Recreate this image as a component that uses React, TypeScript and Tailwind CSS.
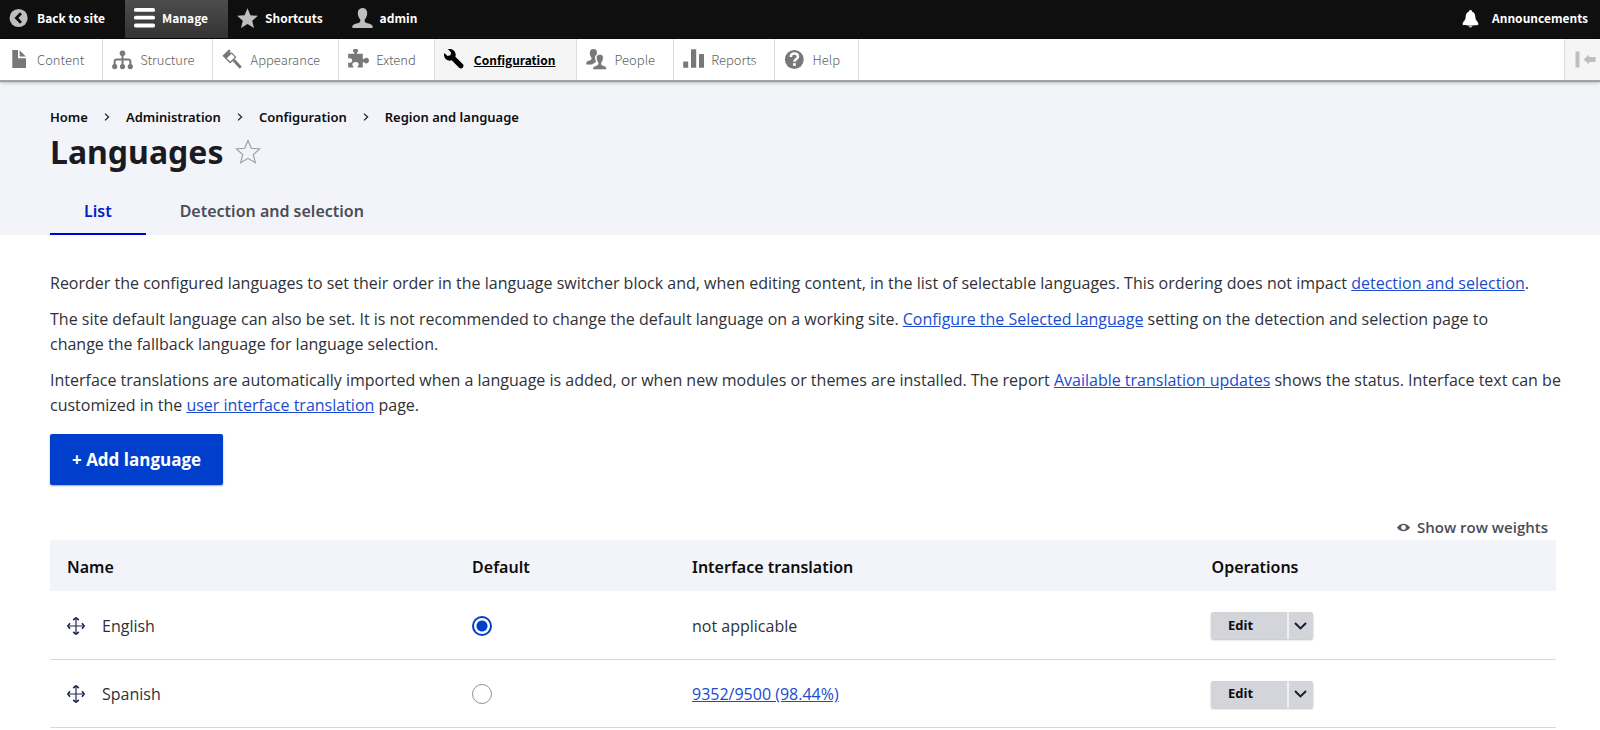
import type { ReactNode } from "react";

type IconProps = { children: ReactNode; className?: string };

function Icon({ children, className = "size-[21px]" }: IconProps) {
  return (
    <svg viewBox="0 0 21 21" className={`${className} shrink-0`} fill="currentColor" aria-hidden="true">
      {children}
    </svg>
  );
}

const STAR = "M10.5 0.3 L13.4 7.2 L20.9 7.8 L15.2 12.7 L17 20 L10.5 16.1 L4 20 L5.8 12.7 L0.1 7.8 L7.6 7.2 Z";

const icons = {
  back: (
    <>
      <circle cx="9.6" cy="10" r="9.1" />
      <path d="M12 5.2 L7.4 10 L12 14.8" fill="none" stroke="#0f0f0f" strokeWidth="2.8" />
    </>
  ),
  menu: (
    <>
      <rect x="0" y="0" width="21" height="3.8" rx="1.6" />
      <rect x="0" y="7.8" width="21" height="3.8" rx="1.6" />
      <rect x="0" y="15.6" width="21" height="3.8" rx="1.6" />
    </>
  ),
  star: <path d={STAR} />,
  user: (
    <path d="M10.5 0 C13.6 0 15.2 2.2 15.2 5 C15.2 7.8 14.2 9.6 13 11.2 C12.4 12.2 12.6 13.8 13.4 14.4 C15.4 15.4 20 15.6 20.6 18 V20 H0.4 V18 C1 15.6 5.6 15.4 7.6 14.4 C8.4 13.8 8.6 12.2 8 11.2 C6.8 9.6 5.8 7.8 5.8 5 C5.8 2.2 7.4 0 10.5 0 Z" />
  ),
  file: (
    <>
      <path d="M3.3 1 H9 V9.2 H17 V19 H3.3 Z" />
      <path d="M10.6 1.2 L16.8 7.6 H10.6 Z" />
    </>
  ),
  structure: (
    <>
      <circle cx="10.5" cy="4.2" r="2.8" />
      <path d="M10.5 5 V17 M2.6 17 V12.8 Q2.6 10.6 4.8 10.6 H16.2 Q18.4 10.6 18.4 12.8 V17" fill="none" stroke="currentColor" strokeWidth="2" />
      <circle cx="2.7" cy="17.6" r="2.6" />
      <circle cx="10.5" cy="17.6" r="2.6" />
      <circle cx="18.3" cy="17.6" r="2.6" />
    </>
  ),
  brush: (
    <>
      <path d="M0.4 6.8 L7.2 0.2 L8.6 1.8 L7.6 4 L9.8 3.2 L14.4 8.2 L8.2 14.4 Z M8.2 12.6 L12.8 8.2 L9.6 4.8 L4.8 9.2 Z" fillRule="evenodd" />
      <path d="M11.6 11 L18.8 18.8" stroke="currentColor" strokeWidth="3" />
    </>
  ),
  puzzle: (
    <path d="M0.2 4.8 H5.8 C6.8 4.8 6.6 3.8 5.4 3 C4.8 1.4 4.4 0 7.6 0 C10.8 0 10.4 1.4 9.8 3 C8.6 3.8 8.4 4.8 9.4 4.8 H14.8 V9.2 C14.8 10.4 15.8 10.4 16.6 9.4 C17.4 8.2 21 8.4 21 11.6 C21 14.8 17.4 15 16.6 13.8 C15.8 12.8 14.8 12.8 14.8 14 V18.6 H9.6 V17.4 C11.4 16.6 11.4 13 7.6 13 C3.8 13 3.8 16.6 5.4 17.4 V18.6 H0.2 V13.4 C2.6 14.4 4.2 13.6 4.2 11.6 C4.2 9.6 2.6 8.8 0.2 9.8 Z" />
  ),
  wrench: (
    <path
      transform="scale(1.3)"
      d="M14.416 11.586l-.01-.008v-.001l-5.656-5.656c.15-.449.252-.921.252-1.421 0-2.485-2.016-4.5-4.502-4.5-.505 0-.981.102-1.434.255l2.431 2.431-.588 2.196-2.196.588-2.445-2.445c-.162.464-.268.956-.268 1.475 0 2.486 2.014 4.5 4.5 4.5.5 0 .972-.102 1.421-.251l5.667 5.665c.781.781 2.047.781 2.828 0s.781-2.047 0-2.828z"
    />
  ),
  people: (
    <>
      <path d="M7.4 0 C10 0 11 1.6 11 3.6 C11 4.6 10.8 5.2 10.4 5.8 C8.8 6.8 8.6 9.6 9.6 11.6 C10.2 12.6 9.8 13.4 8 14.2 C7.2 14.6 6.6 15 6 15.6 H0.2 C0.2 12 1.4 12.2 4.6 11 C5.8 10.4 5.8 9.4 5 8 C4.2 6.8 3.8 5.6 3.8 3.8 C3.8 1.6 5 0 7.4 0 Z" />
      <path
        d="M13.8 5.2 C16.2 5.2 17.4 6.8 17.4 8.8 C17.4 10.6 16.8 12 16 13.2 C15.2 14.6 15.4 15.6 16.6 16.2 C19.6 17.2 20.8 17.4 20.8 20.8 H6.6 C6.6 17.4 7.8 17.2 11 16.2 C12.2 15.6 12.4 14.6 11.6 13.2 C10.8 12 10.2 10.6 10.2 8.8 C10.2 6.8 11.4 5.2 13.8 5.2 Z"
        stroke="#fff"
        strokeWidth="0.9"
      />
    </>
  ),
  reports: (
    <>
      <rect x="0.2" y="12.4" width="5" height="6.4" rx="0.6" />
      <rect x="8" y="0.2" width="5.2" height="18.6" rx="0.6" />
      <rect x="16" y="5" width="5" height="13.8" rx="0.6" />
    </>
  ),
  help: (
    <>
      <circle cx="10.3" cy="10.5" r="9.4" />
      <path d="M6.8 8 C6.8 5.6 8.2 4.6 10.3 4.6 C12.4 4.6 14 5.7 14 7.7 C14 10 10.4 10.2 10.4 12.8" fill="none" stroke="#fff" strokeWidth="2.5" />
      <rect x="9" y="14.2" width="2.8" height="2.6" fill="#fff" />
    </>
  ),
  bell: (
    <>
      <path d="M10.5 2 C11.4 2 11.9 2.6 12 3.4 C14.6 4.2 15.2 6.6 15.4 9.6 C15.6 13 18.4 13.6 18.4 16.2 C18.4 17 17 17.4 10.5 17.4 C4 17.4 2.6 17 2.6 16.2 C2.6 13.6 5.4 13 5.6 9.6 C5.8 6.6 6.4 4.2 9 3.4 C9.1 2.6 9.6 2 10.5 2 Z" />
      <path d="M8.6 17.6 H12.4 C12.2 19 11.6 19.6 10.5 19.6 C9.4 19.6 8.8 19 8.6 17.6 Z" fill="#bebebe" />
    </>
  ),
};

const barItems = [
  { label: "Back to site", icon: icons.back },
  { label: "Manage", icon: icons.menu, active: true },
  { label: "Shortcuts", icon: icons.star },
  { label: "admin", icon: icons.user },
];

const trayItems = [
  { label: "Content", icon: icons.file },
  { label: "Structure", icon: icons.structure },
  { label: "Appearance", icon: icons.brush },
  { label: "Extend", icon: icons.puzzle },
  { label: "Configuration", icon: icons.wrench, active: true },
  { label: "People", icon: icons.people },
  { label: "Reports", icon: icons.reports },
  { label: "Help", icon: icons.help },
];

const crumbs = ["Home", "Administration", "Configuration", "Region and language"];

const rows = [
  { name: "English", isDefault: true, translation: "not applicable", linked: false },
  { name: "Spanish", isDefault: false, translation: "9352/9500 (98.44%)", linked: true },
];

function TextLink({ children }: { children: ReactNode }) {
  return (
    <a href="#" className="text-[#1a4bd0] underline">
      {children}
    </a>
  );
}

function Toolbar() {
  return (
    <div className="relative font-['Noto_Sans_CJK_SC',sans-serif] leading-5">
      <nav aria-label="Toolbar" className="flex h-[39px] border-b border-black bg-[#0f0f0f] text-xs font-bold text-white">
        {barItems.map((item) => (
          <a
            key={item.label}
            href="#"
            className={`flex items-center gap-[7px] pr-5 pb-0.5 pl-[9px] ${item.active ? "bg-linear-to-b from-[#4d4d4d] to-[#333]" : ""}`}
          >
            <Icon className={item.active ? "size-[21px] text-white" : "size-[21px] text-[#bebebe]"}>{item.icon}</Icon>
            {item.label}
          </a>
        ))}
        <button type="button" className="ml-auto flex items-center gap-[11px] pr-3 pb-0.5 font-bold">
          <Icon>{icons.bell}</Icon>
          Announcements
        </button>
      </nav>
      <nav aria-label="Administration menu" className="flex h-[41px] bg-white text-[13px] font-light text-[#606060] shadow-[0_2px_1px_#a0a2a2,0_3px_4px_#c4c5c9]">
        {trayItems.map((item) => (
          <a
            key={item.label}
            href="#"
            className={`flex items-center border-r border-[#ddd] pl-[9px] ${item.active ? "gap-[9px] bg-[#f5f5f5] pr-[21px] text-xs font-bold text-black underline" : "gap-[7px] pr-[18px]"}`}
          >
            <Icon className={item.active ? "size-[21px]" : "size-[21px] text-[#787878]"}>{item.icon}</Icon>
            {item.label}
          </a>
        ))}
        <button
          type="button"
          aria-label="Vertical orientation"
          className="ml-auto flex w-9 items-center justify-end border-l border-[#ddd] bg-[#f5f5f5] pr-1 text-[#bebebe]"
        >
          <Icon>
            <rect x="0.5" y="2.5" width="4" height="16" />
            <path d="M8.6 10.5 L14 5.4 V8 H20.6 V13 H14 V15.6 Z" />
          </Icon>
        </button>
      </nav>
    </div>
  );
}

function PageHeader() {
  return (
    <header className="bg-[#f3f4f9] pt-[26px] pr-11 pl-[50px] font-['Noto_Sans',sans-serif]">
      <nav aria-label="Breadcrumb">
        <ol className="flex text-[13px] leading-[22px] font-semibold text-[#0d0d0d]">
          {crumbs.map((crumb, i) => (
            <li key={crumb} className="flex items-center">
              {i > 0 && (
                <svg viewBox="0 0 6 8" className="mx-4 h-2 w-1.5" fill="none" stroke="#222330" strokeWidth="1.3" aria-hidden="true">
                  <path d="M1 0.6 L4.6 4 L1 7.4" />
                </svg>
              )}
              <a href="#">{crumb}</a>
            </li>
          ))}
        </ol>
      </nav>
      <div className="mt-0.5 flex items-center gap-3">
        <h1 className="text-[32px] leading-[44px] font-bold text-[#1a1b22]">Languages</h1>
        <button type="button" aria-label="Add Languages to shortcuts" className="text-[#9a9caa]">
          <svg viewBox="-1 -1 23 23" className="size-[26px]" fill="none" stroke="currentColor" aria-hidden="true">
            <path d={STAR} />
          </svg>
        </button>
      </div>
      <nav aria-label="Tabs" className="mt-2.5 flex text-base font-semibold">
        <a href="#" className="border-b-2 border-[#0000d9] px-[34px] pt-[13px] pb-2 leading-7 text-[#0020cc]">
          List
        </a>
        <a href="#" className="border-b-2 border-transparent px-[34px] pt-[13px] pb-2 leading-7 text-[#4b4d55]">
          Detection and selection
        </a>
      </nav>
    </header>
  );
}

function Operations() {
  return (
    <div className="inline-flex h-[27px] overflow-hidden rounded-xs bg-[#d4d5da] text-[13px] font-bold text-[#0d0d0d] shadow-[0_1px_2px_rgba(0,0,0,0.25)]">
      <button type="button" className="w-[76px] pr-4 text-center">
        Edit
      </button>
      <button type="button" aria-label="List additional actions" className="flex w-[26px] items-center justify-center border-l-2 border-[#f0f0f3]">
        <svg viewBox="0 0 13 8" className="h-2 w-[13px]" fill="none" stroke="#1a1b33" strokeWidth="2" aria-hidden="true">
          <path d="M1 1 L6.5 6.4 L12 1" />
        </svg>
      </button>
    </div>
  );
}

function LanguageTable() {
  return (
    <table className="w-full table-fixed border-collapse text-left text-base">
      <colgroup>
        <col className="w-[26.9%]" />
        <col className="w-[14.6%]" />
        <col className="w-[34.5%]" />
        <col className="w-[24%]" />
      </colgroup>
      <thead className="bg-[#f3f4f9] font-['Noto_Sans',sans-serif] text-[#0d0d0d]">
        <tr className="h-[51px]">
          {["Name", "Default", "Interface translation", "Operations"].map((title) => (
            <th key={title} scope="col" className="px-[17px] pt-0.5 font-semibold">
              {title}
            </th>
          ))}
        </tr>
      </thead>
      <tbody>
        {rows.map((row) => (
          <tr key={row.name} className="h-[68px] border-b border-[#d8d9de]">
            <td className="px-[17px] pt-0.5">
              <div className="flex items-center gap-[17px]">
                <button type="button" aria-label="Drag to re-order" className="cursor-move">
                  <svg viewBox="0 0 18 18" className="size-[18px]" fill="none" stroke="#222850" strokeWidth="1.2" aria-hidden="true">
                    <path d="M9 1 V17 M1 9 H17" />
                    <path d="M6.2 3 L9 0.8 L11.8 3 M6.2 15 L9 17.2 L11.8 15 M3 6.2 L0.8 9 L3 11.8 M15 6.2 L17.2 9 L15 11.8" strokeWidth="1.6" />
                  </svg>
                </button>
                {row.name}
              </div>
            </td>
            <td className="px-[17px] pt-0.5">
              <input
                type="radio"
                name="site_default_language"
                aria-label={`Set ${row.name} as default`}
                defaultChecked={row.isDefault}
                className="block size-5 appearance-none rounded-full border border-[#8e929c] bg-white checked:border-2 checked:border-[#003ecc] checked:bg-radial checked:from-[#003ecc] checked:from-[5px] checked:to-white checked:to-[6px]"
              />
            </td>
            <td className="px-[17px] pt-0.5">{row.linked ? <TextLink>{row.translation}</TextLink> : row.translation}</td>
            <td className="px-4 pt-0.5">
              <div className="flex">
                <Operations />
              </div>
            </td>
          </tr>
        ))}
      </tbody>
    </table>
  );
}

export default function App() {
  return (
    <div className="min-h-screen bg-white font-['Open_Sans',sans-serif] text-[#303138]">
      <Toolbar />
      <PageHeader />
      <main className="pt-9 pr-11 pl-[50px]">
        <div className="-mr-3 flex flex-col gap-[11px] text-base leading-[25px]">
          <p>
            Reorder the configured languages to set their order in the language switcher block and, when editing content, in the list of
            selectable languages. This ordering does not impact <TextLink>detection and selection</TextLink>.
          </p>
          <p>
            The site default language can also be set. It is not recommended to change the default language on a working site.{" "}
            <TextLink>Configure the Selected language</TextLink> setting on the detection and selection page to{" "}
            <span className="inline-block">change the fallback language for language selection.</span>
          </p>
          <p>
            Interface translations are automatically imported when a language is added, or when new modules or themes are installed. The
            report <TextLink>Available translation updates</TextLink> shows the status. Interface text can be customized in the{" "}
            <TextLink>user interface translation</TextLink> page.
          </p>
        </div>
        <a
          href="#"
          className="mt-4 inline-flex h-[51px] items-center rounded-xs bg-[#003ecc] px-[22px] text-[17px] font-bold text-white shadow-[0_1px_2px_rgba(0,0,0,0.35)]"
        >
          + Add language
        </a>
        <div className="mt-[29px] flex justify-end">
          <button type="button" className="flex items-center gap-[7px] pr-2 text-[15px] leading-[26px] font-semibold text-[#4b4d55]">
            <svg viewBox="0 0 13 9" className="h-[9px] w-[13px]" aria-hidden="true">
              <path d="M0 4.5 C3 -0.6 10 -0.6 13 4.5 C10 9.6 3 9.6 0 4.5 Z" fill="#55565f" />
              <circle cx="6.5" cy="4.5" r="2.4" fill="#fff" />
            </svg>
            Show row weights
          </button>
        </div>
        <LanguageTable />
      </main>
    </div>
  );
}
